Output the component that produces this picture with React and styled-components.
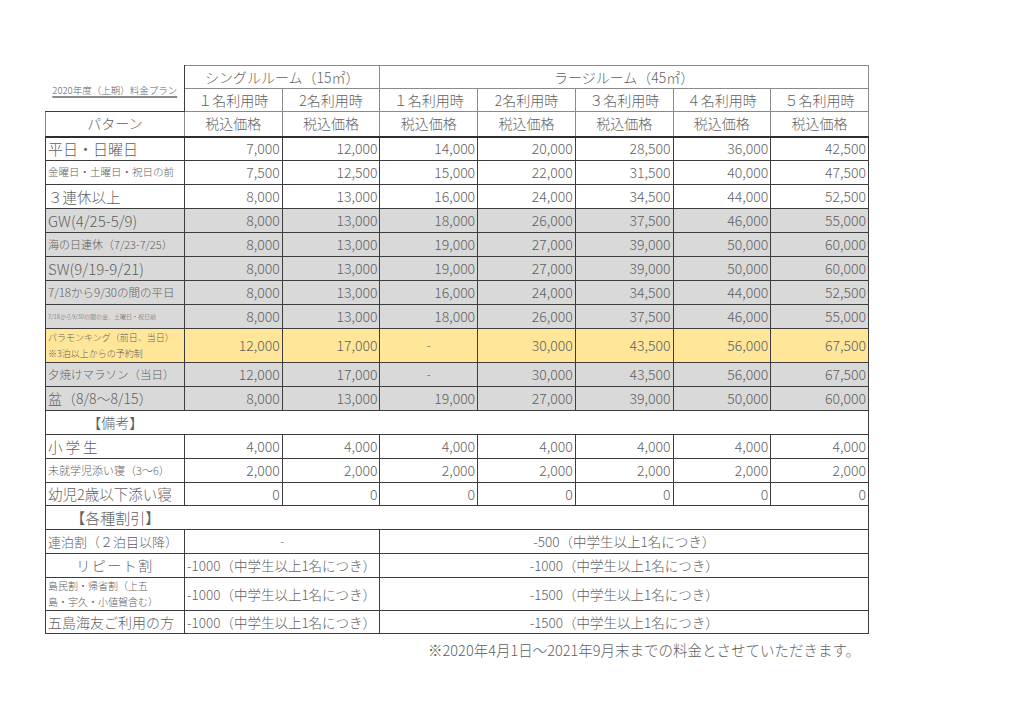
import React from 'react';
import styled, { createGlobalStyle } from 'styled-components';

const GlobalStyle = createGlobalStyle`
  body {
    margin: 0;
    background: #ffffff;
    font-family: "Noto Sans CJK JP", "Noto Sans", sans-serif;
    color: #5f5f5f;
  }
`;

const Page = styled.div`
  padding: 65px 0 0 45px;
  width: 824px;
`;

const Table = styled.table`
  border-collapse: collapse;
  table-layout: fixed;
  width: 824px;
  font-weight: 300;
`;

const Row = styled.tr`
  height: ${p => p.$h || 24}px;
  background: ${p => p.$bg || 'transparent'};
`;

const Cell = styled.td`
  border: 1px solid ${p => (p.$head ? '#8a8a8a' : '#3c3c3c')};
  padding: 0 2px;
  font-size: ${p => p.$size || 14}px;
  line-height: ${p => (p.$lh ? p.$lh : '1.2')};
  text-align: ${p => p.$align || 'left'};
  letter-spacing: ${p => p.$ls || 0}px;
  white-space: nowrap;
  overflow: hidden;
  vertical-align: middle;
  ${p => p.$thickTop && 'border-top: 2px solid #2e2e2e;'}
  ${p => p.$noRight && 'border-right: none;'}
  ${p => p.$noLeft && 'border-left: none;'}
  ${p => p.$bare && 'border-top: none; border-left: none;'}
`;

const PlanTitle = styled.span`
  font-size: 9.5px;
  text-decoration: underline;
  text-decoration-color: #8a8a8a;
  text-decoration-thickness: 1.5px;
  text-underline-offset: 2px;
`;

const Note = styled.div`
  text-align: right;
  padding-right: 9px;
  margin-top: 5px;
  font-size: 14.5px;
  font-weight: 300;
`;

const prices = [
  { label: '平日・日曜日', size: 15, v: ['7,000', '12,000', '14,000', '20,000', '28,500', '36,000', '42,500'] },
  { label: '金曜日・土曜日・祝日の前', size: 10.5, v: ['7,500', '12,500', '15,000', '22,000', '31,500', '40,000', '47,500'] },
  { label: '３連休以上', size: 14.5, v: ['8,000', '13,000', '16,000', '24,000', '34,500', '44,000', '52,500'] },
  { label: 'GW(4/25-5/9)', size: 15, bg: '#d9d9d9', v: ['8,000', '13,000', '18,000', '26,000', '37,500', '46,000', '55,000'] },
  { label: '海の日連休（7/23-7/25）', size: 11, bg: '#d9d9d9', v: ['8,000', '13,000', '19,000', '27,000', '39,000', '50,000', '60,000'] },
  { label: 'SW(9/19-9/21)', size: 15, bg: '#d9d9d9', v: ['8,000', '13,000', '19,000', '27,000', '39,000', '50,000', '60,000'] },
  { label: '7/18から9/30の間の平日', size: 11.5, bg: '#d9d9d9', v: ['8,000', '13,000', '16,000', '24,000', '34,500', '44,000', '52,500'] },
  { label: '7/18から9/30の間の金、土曜日・祝日前', size: 6, bg: '#d9d9d9', v: ['8,000', '13,000', '18,000', '26,000', '37,500', '46,000', '55,000'] },
  { label: ['パラモンキング（前日、当日）', '※3泊以上からの予約制'], size: 9, h: 34, bg: '#ffe699', v: ['12,000', '17,000', '-', '30,000', '43,500', '56,000', '67,500'] },
  { label: '夕焼けマラソン（当日）', size: 11.5, bg: '#d9d9d9', v: ['12,000', '17,000', '-', '30,000', '43,500', '56,000', '67,500'] },
  { label: '盆（8/8～8/15）', size: 14, bg: '#d9d9d9', v: ['8,000', '13,000', '19,000', '27,000', '39,000', '50,000', '60,000'] },
];

const extras = [
  { label: '小学生', size: 14.5, ls: 3, v: ['4,000', '4,000', '4,000', '4,000', '4,000', '4,000', '4,000'] },
  { label: '未就学児添い寝（3～6）', size: 11, v: ['2,000', '2,000', '2,000', '2,000', '2,000', '2,000', '2,000'] },
  { label: '幼児2歳以下添い寝', size: 14.5, h: 23, v: ['0', '0', '0', '0', '0', '0', '0'] },
];

const discounts = [
  { label: '連泊割（２泊目以降）', size: 13, single: '-', large: '-500（中学生以上1名につき）' },
  { label: 'リピート割', size: 14, align: 'center', ls: 1.5, single: '-1000（中学生以上1名につき）', large: '-1000（中学生以上1名につき）' },
  { label: ['島民割・帰省割（上五', '島・宇久・小値賀含む）'], size: 10, h: 32, lh: '1.6', single: '-1000（中学生以上1名につき）', large: '-1500（中学生以上1名につき）' },
  { label: '五島海友ご利用の方', size: 14, h: 23, single: '-1000（中学生以上1名につき）', large: '-1500（中学生以上1名につき）' },
];

function Label({ text }) {
  if (Array.isArray(text)) {
    return text.map((t, i) => (
      <React.Fragment key={i}>
        {i > 0 && <br />}
        {t}
      </React.Fragment>
    ));
  }
  return text;
}

function PriceRow({ r, first }) {
  return (
    <Row $h={r.h} $bg={r.bg}>
      <Cell $size={r.size} $ls={r.ls} $lh={r.h > 30 ? '1.75' : null} $thickTop={first}>
        <Label text={r.label} />
      </Cell>
      {r.v.map((v, i) => (
        <Cell key={i} $align={v === '-' ? 'center' : 'right'} $size={v === '-' ? 12 : 14} $thickTop={first}>
          {v}
        </Cell>
      ))}
    </Row>
  );
}

function SectionRow({ title, size }) {
  return (
    <Row>
      <Cell $align="center" $noRight $size={size}>{title}</Cell>
      <Cell colSpan={7} $noLeft />
    </Row>
  );
}

export default function App() {
  const heads = ['１名利用時', '2名利用時', '１名利用時', '2名利用時', '３名利用時', '４名利用時', '５名利用時'];
  return (
    <>
      <GlobalStyle />
      <Page>
        <Table>
          <colgroup>
            <col style={{ width: 139 }} />
            {heads.map((_, i) => <col key={i} />)}
          </colgroup>
          <tbody>
            <Row $h={23}>
              <Cell rowSpan={2} $bare $align="center">
                <PlanTitle>2020年度（上期）料金プラン</PlanTitle>
              </Cell>
              <Cell colSpan={2} $head $align="center" $size={14}>シングルルーム（15㎡）</Cell>
              <Cell colSpan={5} $head $align="center" $size={14}>ラージルーム（45㎡）</Cell>
            </Row>
            <Row $h={23}>
              {heads.map((h, i) => (
                <Cell key={i} $head $align="center" $size={14}>{h}</Cell>
              ))}
            </Row>
            <Row $h={25}>
              <Cell $head $align="center" $size={14}>パターン</Cell>
              {heads.map((_, i) => (
                <Cell key={i} $head $align="center" $size={14}>税込価格</Cell>
              ))}
            </Row>
            {prices.map((r, i) => (
              <PriceRow key={i} r={r} first={i === 0} />
            ))}
            <SectionRow title="【備考】" size={14} />
            {extras.map((r, i) => (
              <PriceRow key={i} r={r} />
            ))}
            <SectionRow title="【各種割引】" size={15} />
            {discounts.map((d, i) => (
              <Row key={i} $h={d.h}>
                <Cell $size={d.size} $align={d.align} $ls={d.ls} $lh={d.lh}>
                  <Label text={d.label} />
                </Cell>
                <Cell colSpan={2} $align={d.single === '-' ? 'center' : 'left'} $size={d.single === '-' ? 12 : 13.5}>
                  {d.single}
                </Cell>
                <Cell colSpan={5} $align="center" $size={13.5}>{d.large}</Cell>
              </Row>
            ))}
          </tbody>
        </Table>
        <Note>※2020年4月1日～2021年9月末までの料金とさせていただきます。</Note>
      </Page>
    </>
  );
}
